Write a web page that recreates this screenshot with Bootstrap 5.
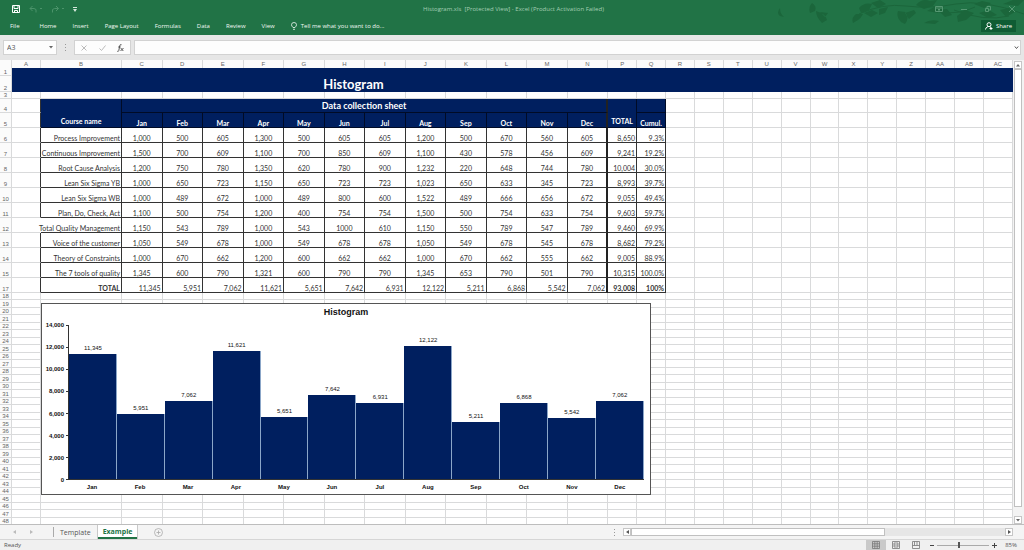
<!DOCTYPE html>
<html lang="en">
<head>
<meta charset="utf-8">
<meta name="viewport" content="width=device-width, initial-scale=1">
<title>Histogram.xls - Excel</title>
<link href="https://cdn.jsdelivr.net/npm/bootstrap@5.3.0/dist/css/bootstrap.min.css" rel="stylesheet">
<style>
  :root { --green:#217346; --navy:#001f5f; --grid:#d9dadb; --ink:#333; }
  body { font-family:"Open Sans","Noto Sans",sans-serif; font-size:6px; line-height:8px; color:#555; background:#e6e6e6; }
  button, input { font:inherit; color:inherit; }
  button { background:none; border:0; padding:0; }
  svg { display:block; flex:none; }

  .app-head { background:var(--green); color:#f1f8f4; height:35px; }
  .app-head a { color:inherit; text-decoration:none; }
  .leaves { position:absolute; right:0; top:0; }
  .title-row { height:18px; }
  .quick, .win { flex:1 1 0; }
  .quick { gap:9px; padding-left:12px; }
  .doc-title { color:#a5cfb5; }
  .win { gap:18px; padding-right:9px; color:#569873; }
  .menu-row { height:15px; padding:0 8px 0 10px; }
  .menu { gap:16px; }
  .share { background:#0f5c33; color:#fff; height:12px; padding:0 4px; gap:3px; }

  .formula-row { height:25px; padding:0 3px; gap:3px; }
  .boxed { background:#fdfdfd; border:1px solid #d2d2d2; height:15px; }
  .name-box { width:54px; padding:0 3px; }
  .name-box input { width:34px; border:0; background:none; padding:0; font-size:7px; }
  .fx-tools { width:57px; padding:0 6px; }
  .grip { width:11px; }
  .formula-box input { border:0; background:none; outline:0; min-width:0; }

  .sheet { overflow:hidden; background:#fff; min-height:0; }
  .grid { table-layout:fixed; width:100%; border-collapse:separate; border-spacing:0; font:7px/8px Lato,sans-serif; color:var(--ink); }
  .grid th, .grid td { padding:0; border:0 solid var(--grid); border-width:0 1px 1px 0; white-space:nowrap; vertical-align:bottom; font-weight:400; text-align:center; }
  .c-num { width:12px; } .c-a { width:29px; } .c-b { width:81px; } .c-m { width:4%; }
  .grid thead th { height:8px; line-height:7px; border-bottom:0; color:#666; font-family:"Liberation Sans",sans-serif; font-size:6px; background:#fbfbfb; }
  .grid .num { font:6px/6px "Liberation Sans",sans-serif; color:#666; background:#fbfbfb; }
  .r7 { height:7px; } .r8 { height:8px; } .r14 { height:14px; } .r15 { height:15px; } .r16 { height:16px; }
  .grid .navy { background:var(--navy); color:#fff; font-weight:700; border-color:#000b26; }
  .grid .banner { border:0; font-size:13px; line-height:16px; }
  .grid .sheet-name { font-size:9px; line-height:12px; }
  .grid .raised { padding-bottom:2px; }
  .grid .cell { border-color:#333; }
  .grid .edge { border-right:2px solid #222; }
  .grid .end { text-align:right; padding-right:1px; }
  .grid .open { border-right-color:#333; }
  .grid .spill { border-right-color:transparent; }
  .spill-text { display:block; margin-left:-8px; }

  .chart { position:absolute; top:243px; left:41px; width:calc(60% + 2px); height:192px; background:#fff; border:1px solid #555; color:#111; font:6px/8px "Liberation Sans",sans-serif; }
  .chart h2 { font-size:9px; line-height:17px; font-weight:700; margin:0 0 4px; }
  .chart-body { padding-right:6px; }
  .axis { width:26px; font-weight:700; }
  .axis li { height:0; line-height:0; display:flex; align-items:center; justify-content:flex-end; gap:2px; }
  .axis li::after { content:""; width:2px; height:1px; background:#333; }
  .plot { height:155px; border-left:1px solid #333; border-bottom:1px solid #333; }
  .bar-fill { background:var(--navy); border-right:1px solid #8ba6c8; }
  .bar-label { line-height:12px; }
  .months { margin-left:26px; padding-top:3px; font-weight:700; }

  .v-scroll { width:11px; padding:1px 2px 0 1px; background:#f3f3f3; }
  .sb { width:8px; height:8px; background:#fff; border:1px solid #c6c6c6; display:flex; align-items:center; justify-content:center; flex:none; }
  .thumb { background:#fff; border:1px solid #c0c0c0; }
  .v-scroll .thumb { flex:1; width:8px; margin-bottom:9px; }

  .tab-bar { height:15px; background:#f4f4f4; border-top:1px solid #bdbdbd; font-size:7px; }
  .tab-bar a { color:#555; text-decoration:none; padding:0 6px; line-height:13px; }
  .tab-bar a.active { color:var(--green); font-weight:700; background:#fff; border:1px solid #c9c9c9; border-width:0 1px 0 1px; box-shadow:inset 0 -2px var(--green); padding:0 5px; height:14px; }
  .tab-nav { width:54px; padding:0 20px 0 13px; border-right:1px solid #aaa; height:10px; }
  .h-scroll { width:calc(40% + 8px); padding-right:11px; }
  .h-track { background:#e6e6e6; }
  .h-track .thumb { height:8px; width:68%; }

  .status { height:11px; background:#f0f0f0; border-top:1px solid #d6d6d6; padding:0 7px 0 4px; }
  .view { width:20px; height:10px; display:flex; align-items:center; justify-content:center; }
  .view.on { background:#c9c9c9; }
  .zoom { appearance:none; width:52px; height:8px; background:linear-gradient(#aaa,#aaa) center/100% 1px no-repeat; margin:0 3px; }
  .zoom::-webkit-slider-thumb { appearance:none; width:2px; height:6px; background:#555; }
</style>
</head>
<body class="vh-100 d-flex flex-column overflow-hidden">

<header class="app-head position-relative flex-shrink-0">
  <svg class="leaves" width="260" height="35" viewBox="0 0 260 35" fill="#1b663b" aria-hidden="true">
    <path d="M16 8q-4 5 0 8l4 1q-4-3-4-9zM48 3q-4 4-2 10l5-2q2-5-3-8zM52 11q0 6 6 12l5-3q-1-6-11-9zM56 12l8 1-3 4zM92 14q-5 4-3 9l5-3q3-2 5-6zM95 8q5-6 13-4l-3 6-8 3zM107 3l9-3 6 4-8 4zM100 13l8-3 6 3-7 4zM115 9l9-2-3 6-6 2zM134 11q-2 6 3 11l4 2q5-6 0-12zM141 13l9-3 2 3-7 6zM152 5q6-7 14-4l7-1-4 6-9 3zM163 11l9-5 8 1-6 6zM160 23q6-4 15-2l-4 3zM174 10l9-1 5 6-7 2zM193 16l8-6 9 3-8 7-8 2zM210 4l8-3 9 2-7 5zM215 13l10-3 8 5-9 3zM236 10l9-2 6 4-9 5zM239 4l10-4h11l-6 6z"/>
    <path d="M95 14q24-11 47-8t50-2 68 10M175 12q20 3 36-5M190 10q30 12 55 6" fill="none" stroke="#1b663b"/>
  </svg>
  <div class="title-row position-relative d-flex align-items-center">
    <div class="quick d-flex align-items-center">
      <button aria-label="Save"><svg width="8" height="8" viewBox="0 0 8 8" fill="none" stroke="#fff"><path d="M.5.5h7v7h-7zM2 .5v3h4v-3M2.500 7.500v-2h3v2"/></svg></button>
      <button aria-label="Undo"><svg width="13" height="8" viewBox="0 0 13 8" fill="none" stroke="#4b936a"><path d="M3.500 1L1 3.500 3.500 6M1 3.500h4q3 0 2 4M11 3.500h2"/></svg></button>
      <button aria-label="Redo"><svg width="13" height="8" viewBox="0 0 13 8" fill="none" stroke="#4b936a"><path d="M5 1l2.500 2.500L5 6M7.500 3.500h-4q-3 0-2 4M11 3.500h2"/></svg></button>
      <button aria-label="Customize toolbar"><svg width="4" height="5" viewBox="0 0 4 5" fill="#d5e8dc"><path d="M0 0h4v1H0zM0 2h4L2 5z"/></svg></button>
    </div>
    <div class="doc-title">Histogram.xls&nbsp; [Protected View] - Excel (Product Activation Failed)</div>
    <div class="win d-flex align-items-center justify-content-end">
      <button aria-label="Ribbon display options"><svg width="8" height="6" viewBox="0 0 8 6" fill="none" stroke="currentColor"><path d="M.5.5h7v5h-7zM.5 2h7M4 5V3M3 4l1-1 1 1"/></svg></button>
      <button aria-label="Minimize"><svg width="6" height="6" viewBox="0 0 6 6" stroke="currentColor"><path d="M0 3.500h6"/></svg></button>
      <button aria-label="Restore"><svg width="6" height="6" viewBox="0 0 6 6" fill="none" stroke="currentColor"><path d="M.5 2.500h3v3h-3zM2 2V.5h3.500V4H4"/></svg></button>
      <button aria-label="Close"><svg width="6" height="6" viewBox="0 0 6 6" stroke="currentColor"><path d="M0 0l6 6M6 0L0 6"/></svg></button>
    </div>
  </div>
  <div class="menu-row position-relative d-flex align-items-center justify-content-between">
    <nav class="menu d-flex align-items-center">
      <a href="#" class="me-1">File</a><a href="#">Home</a><a href="#">Insert</a><a href="#">Page Layout</a><a href="#">Formulas</a><a href="#">Data</a><a href="#">Review</a><a href="#">View</a>
      <button class="d-flex align-items-center gap-1"><svg width="6" height="8" viewBox="0 0 6 8" fill="none" stroke="currentColor" stroke-width=".8"><path d="M2 5.500Q.5 4 .5 2.800a2.500 2.300 0 0 1 5 0Q5.500 4 4 5.500zM2 7.300h2"/></svg>Tell me what you want to do...</button>
    </nav>
    <button class="share d-flex align-items-center"><svg width="8" height="8" viewBox="0 0 8 8" fill="none" stroke="#fff"><circle cx="4" cy="2.700" r="2"/><path d="M.5 7.500q0-2 2.500-3M5 4.700l1 .8M6 5v3M4.500 6.500h3"/></svg>Share</button>
  </div>
</header>

<div class="formula-row d-flex align-items-center flex-shrink-0">
  <div class="boxed name-box d-flex align-items-center justify-content-between">
    <input type="text" value="A3" aria-label="Name box">
    <svg width="4" height="3" viewBox="0 0 4 3" fill="#666"><path d="M0 0h4L2 2.500z"/></svg>
  </div>
  <div class="grip d-flex justify-content-center"><svg width="1" height="7" viewBox="0 0 1 7" fill="#999"><path d="M0 0h1v1H0zM0 3h1v1H0zM0 6h1v1H0z"/></svg></div>
  <div class="boxed fx-tools d-flex align-items-center justify-content-between">
    <button aria-label="Cancel"><svg width="6" height="6" viewBox="0 0 6 6" stroke="#bbb"><path d="M.5.5l5 5M5.500.5l-5 5"/></svg></button>
    <button aria-label="Enter"><svg width="7" height="6" viewBox="0 0 7 6" fill="none" stroke="#bbb"><path d="M.5 3.500l2 2 4-5"/></svg></button>
    <button aria-label="Insert function"><svg width="7" height="8" viewBox="0 0 7 8" fill="none" stroke="#444" stroke-width=".9"><path d="M4.500.7Q3 0 2.700 2L1.800 6.500Q1.500 7.800.3 7.300M1.200 3h2.500M3.700 4l2.600 3M6.500 4L3.500 7"/></svg></button>
  </div>
  <div class="boxed formula-box d-flex align-items-center flex-grow-1">
    <input type="text" class="flex-grow-1" aria-label="Formula bar">
    <svg width="6" height="4" viewBox="0 0 6 4" fill="none" stroke="#555"><path d="M.8.5L2.500 2.500 4.200.5"/></svg>
  </div>
</div>

<main class="d-flex flex-grow-1 overflow-hidden">
  <div class="sheet position-relative flex-grow-1">
    <table class="grid" id="grid"></table>
    <section class="chart">
      <h2 class="text-center">Histogram</h2>
      <div class="chart-body">
        <div class="d-flex">
          <ul class="axis list-unstyled d-flex flex-column justify-content-between m-0" id="axis"></ul>
          <div class="plot d-flex align-items-end flex-grow-1" id="plot"></div>
        </div>
        <div class="months d-flex text-center" id="months"></div>
      </div>
    </section>
  </div>
  <div class="v-scroll d-flex flex-column align-items-center flex-shrink-0">
    <button class="sb" aria-label="Scroll up"><svg width="4" height="3" viewBox="0 0 4 3" fill="#666"><path d="M0 2.500h4L2 0z"/></svg></button>
    <div class="thumb"></div>
    <button class="sb" aria-label="Scroll down"><svg width="4" height="3" viewBox="0 0 4 3" fill="#666"><path d="M0 0h4L2 2.500z"/></svg></button>
  </div>
</main>

<div class="tab-bar d-flex align-items-center justify-content-between flex-shrink-0">
  <div class="d-flex align-items-center">
    <div class="tab-nav d-flex align-items-center justify-content-between">
      <button aria-label="Previous sheet"><svg width="3" height="4" viewBox="0 0 3 4" fill="#bbb"><path d="M3 0v4L0 2z"/></svg></button>
      <button aria-label="Next sheet"><svg width="3" height="4" viewBox="0 0 3 4" fill="#bbb"><path d="M0 0v4l3-2z"/></svg></button>
    </div>
    <a href="#">Template</a><a href="#" class="active">Example</a>
    <button class="ms-3" aria-label="New sheet"><svg width="9" height="9" viewBox="0 0 9 9" fill="none" stroke="#aaa" stroke-width=".8"><circle cx="4.500" cy="4.500" r="4"/><path d="M4.500 2.500v4M2.500 4.500h4"/></svg></button>
  </div>
  <div class="h-scroll d-flex align-items-center">
    <svg class="mx-2" width="1" height="7" viewBox="0 0 1 7" fill="#999"><path d="M0 0h1v1H0zM0 3h1v1H0zM0 6h1v1H0z"/></svg>
    <button class="sb" aria-label="Scroll left"><svg width="3" height="4" viewBox="0 0 3 4" fill="#555"><path d="M3 0v4L0 2z"/></svg></button>
    <div class="h-track flex-grow-1"><div class="thumb"></div></div>
    <button class="sb" aria-label="Scroll right"><svg width="3" height="4" viewBox="0 0 3 4" fill="#555"><path d="M0 0v4l3-2z"/></svg></button>
  </div>
</div>

<footer class="status d-flex align-items-center justify-content-between flex-shrink-0">
  <span>Ready</span>
  <div class="d-flex align-items-center">
    <button class="view on" aria-label="Normal view"><svg width="8" height="8" viewBox="0 0 8 8" fill="none" stroke="#777" stroke-width=".8"><path d="M.5.5h7v7h-7zM.5 2.800h7M.5 5.200h7M2.800.5v7M5.200.5v7"/></svg></button>
    <button class="view" aria-label="Page layout view"><svg width="8" height="8" viewBox="0 0 8 8" fill="none" stroke="#777" stroke-width=".8"><path d="M.5.5h7v7h-7zM2 2h4v4H2zM2 4h4"/></svg></button>
    <button class="view" aria-label="Page break view"><svg width="8" height="8" viewBox="0 0 8 8" fill="none" stroke="#777" stroke-width=".8"><path d="M.5.5h7v7h-7zM2.500.5v4M5 .5v4M.5 4.500h7"/></svg></button>
    <button class="ms-1" aria-label="Zoom out"><svg width="4" height="4" viewBox="0 0 4 4" stroke="#444"><path d="M0 2.500h4"/></svg></button>
    <input class="zoom" type="range" min="0" max="100" value="42" aria-label="Zoom">
    <button aria-label="Zoom in"><svg width="5" height="5" viewBox="0 0 5 5" stroke="#444"><path d="M0 2.500h5M2.500 0v5"/></svg></button>
    <span class="ms-2">85%</span>
  </div>
</footer>

<script src="https://cdn.jsdelivr.net/npm/bootstrap@5.3.0/dist/js/bootstrap.bundle.min.js"></script>
<script>
  const months = ['Jan','Feb','Mar','Apr','May','Jun','Jul','Aug','Sep','Oct','Nov','Dec'];
  const rows = [
    ['Process Improvement','1,000 500 605 1,300 500 605 605 1,200 500 670 560 605','8,650','9.3%'],
    ['Continuous Improvement','1,500 700 609 1,100 700 850 609 1,100 430 578 456 609','9,241','19.2%'],
    ['Root Cause Analysis','1,200 750 780 1,350 620 780 900 1,232 220 648 744 780','10,004','30.0%'],
    ['Lean Six Sigma YB','1,000 650 723 1,150 650 723 723 1,023 650 633 345 723','8,993','39.7%'],
    ['Lean Six Sigma WB','1,000 489 672 1,000 489 800 600 1,522 489 666 656 672','9,055','49.4%'],
    ['Plan, Do, Check, Act','1,100 500 754 1,200 400 754 754 1,500 500 754 633 754','9,603','59.7%'],
    ['Total Quality Management','1,150 543 789 1,000 543 1000 610 1,150 550 789 547 789','9,460','69.9%'],
    ['Voice of the customer','1,050 549 678 1,000 549 678 678 1,050 549 678 545 678','8,682','79.2%'],
    ['Theory of Constraints','1,000 670 662 1,200 600 662 662 1,000 670 662 555 662','9,005','88.9%'],
    ['The 7 tools of quality','1,345 600 790 1,321 600 790 790 1,345 653 790 501 790','10,315','100.0%']
  ];
  const totals = [11345,5951,7062,11621,5651,7642,6931,12122,5211,6868,5542,7062];
  const fmt = n => n.toLocaleString('en-US');
  const num = n => `<th class="num" scope="row">${n}</th>`;
  const blank = n => '<td></td>'.repeat(n);
  const last = (i, cls) => i === 11 ? cls + ' edge' : cls;

  const letters = 'A B C D E F G H I J K L M N P Q R S T U V W X Y Z AA AB AC'.split(' ');
  let html = '<colgroup><col class="c-num"><col class="c-a"><col class="c-b">' +
    '<col class="c-m">'.repeat(12) + '<col>'.repeat(14) + '</colgroup>' +
    '<thead><tr><th></th>' + letters.map(l => `<th scope="col">${l}</th>`).join('') + '</tr></thead><tbody>';

  html += `<tr class="r8">${num(1)}<td class="navy banner" colspan="28"></td></tr>`;
  html += `<tr class="r16">${num(2)}<td class="navy banner"></td><td class="navy banner" colspan="15">Histogram</td><td class="navy banner" colspan="12"></td></tr>`;
  html += `<tr class="r7">${num(3)}${blank(28)}</tr>`;
  html += `<tr class="r14">${num(4)}<td class="open"></td><th class="navy raised" rowspan="2">Course name</th><th class="navy sheet-name edge" colspan="12">Data collection sheet</th><th class="navy raised" rowspan="2">TOTAL</th><th class="navy"></th>${blank(12)}</tr>`;
  html += `<tr class="r15">${num(5)}<td class="open"></td>${months.map((m, i) => `<th class="${last(i, 'navy')}">${m}</th>`).join('')}<th class="navy">Cumul.</th>${blank(12)}</tr>`;
  rows.forEach(([name, values, total, share], r) => {
    const spills = name.startsWith('Total');
    html += `<tr class="r15">${num(r + 6)}<td class="${spills ? 'spill' : 'open'}"></td><td class="cell end"><span class="spill-text">${name}</span></td>` +
      values.split(' ').map((v, i) => `<td class="${last(i, 'cell')}">${v}</td>`).join('') +
      `<td class="cell end">${total}</td><td class="cell end">${share}</td>${blank(12)}</tr>`;
  });
  html += `<tr class="r15">${num(17)}<td class="open"></td><td class="cell end fw-bold">TOTAL</td>` +
    totals.map((v, i) => `<td class="${last(i, 'cell end')}">${fmt(v)}</td>`).join('') +
    `<td class="cell end fw-bold">93,008</td><td class="cell end fw-bold">100%</td>${blank(12)}</tr>`;
  for (let n = 18; n <= 48; n++) html += `<tr class="${n % 2 ? 'r8' : 'r7'}">${num(n)}${blank(28)}</tr>`;
  document.getElementById('grid').innerHTML = html + '</tbody>';

  const axisMax = 14000;
  for (let v = axisMax; v >= 0; v -= 2000) document.getElementById('axis').innerHTML += `<li>${fmt(v)}</li>`;
  document.getElementById('plot').innerHTML = totals.map(v =>
    `<div class="h-100 d-flex flex-column justify-content-end text-center" style="width:${100 / 12}%"><span class="bar-label">${fmt(v)}</span><div class="bar-fill" style="height:${v / axisMax * 100}%"></div></div>`).join('');
  document.getElementById('months').innerHTML = months.map(m => `<span class="flex-fill w-100">${m}</span>`).join('');
</script>
</body>
</html>
